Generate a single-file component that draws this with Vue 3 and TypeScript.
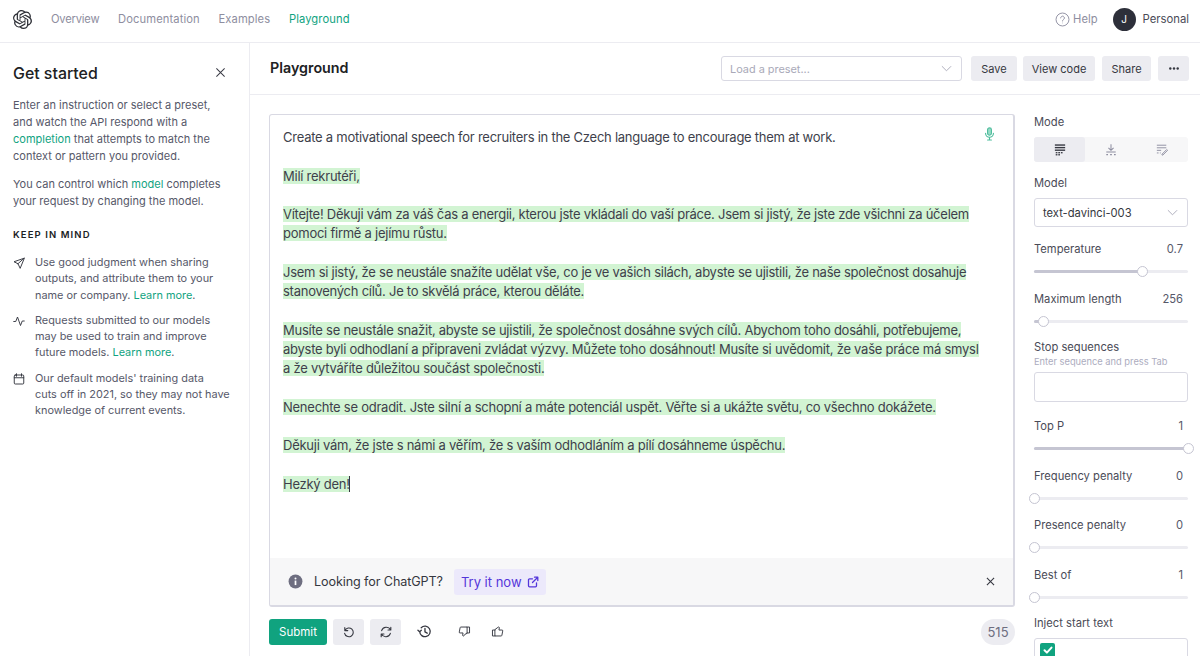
<script setup lang="ts">
interface Slider { label: string; value: string; pct: number }
const navItems = ['Overview', 'Documentation', 'Examples']
const sliders1: Slider[] = [
  { label: 'Temperature', value: '0.7', pct: 70 },
  { label: 'Maximum length', value: '256', pct: 6 },
]
const sliders2: Slider[] = [
  { label: 'Top P', value: '1', pct: 100 },
  { label: 'Frequency penalty', value: '0', pct: 0 },
  { label: 'Presence penalty', value: '0', pct: 0 },
  { label: 'Best of', value: '1', pct: 0 },
]
const paragraphs: string[][] = [
  ['Milí rekrutéři,'],
  ['Vítejte! Děkuji vám za váš čas a energii, kterou jste vkládali do vaší práce. Jsem si jistý, že jste zde všichni za účelem', 'pomoci firmě a jejímu růstu.'],
  ['Jsem si jistý, že se neustále snažíte udělat vše, co je ve vašich silách, abyste se ujistili, že naše společnost dosahuje', 'stanovených cílů. Je to skvělá práce, kterou děláte.'],
  ['Musíte se neustále snažit, abyste se ujistili, že společnost dosáhne svých cílů. Abychom toho dosáhli, potřebujeme,', 'abyste byli odhodlaní a připraveni zvládat výzvy. Můžete toho dosáhnout! Musíte si uvědomit, že vaše práce má smysl', 'a že vytváříte důležitou součást společnosti.'],
  ['Nenechte se odradit. Jste silní a schopní a máte potenciál uspět. Věřte si a ukážte světu, co všechno dokážete.'],
  ['Děkuji vám, že jste s námi a věřím, že s vaším odhodláním a pílí dosáhneme úspěchu.'],
  ['Hezký den!'],
]
</script>

<template>
  <div class="page">
    <header class="topbar">
      <svg class="logo" viewBox="0 0 24 24" fill="#2d2f36"><path d="M22.2819 9.8211a5.9847 5.9847 0 0 0-.5157-4.9108 6.0462 6.0462 0 0 0-6.5098-2.9A6.0651 6.0651 0 0 0 4.9807 4.1818a5.9847 5.9847 0 0 0-3.9977 2.9 6.0462 6.0462 0 0 0 .7427 7.0966 5.98 5.98 0 0 0 .511 4.9107 6.051 6.051 0 0 0 6.5146 2.9001A5.9847 5.9847 0 0 0 13.2599 24a6.0557 6.0557 0 0 0 5.7718-4.2058 5.9894 5.9894 0 0 0 3.9977-2.9001 6.0557 6.0557 0 0 0-.7475-7.0729zm-9.022 12.6081a4.4755 4.4755 0 0 1-2.8764-1.0408l.1419-.0804 4.7783-2.7582a.7948.7948 0 0 0 .3927-.6813v-6.7369l2.02 1.1686a.071.071 0 0 1 .038.052v5.5826a4.504 4.504 0 0 1-4.4945 4.4944zm-9.6607-4.1254a4.4708 4.4708 0 0 1-.5346-3.0137l.142.0852 4.783 2.7582a.7712.7712 0 0 0 .7806 0l5.8428-3.3685v2.3324a.0804.0804 0 0 1-.0332.0615L9.74 19.9502a4.4992 4.4992 0 0 1-6.1408-1.6464zM2.3408 7.8956a4.485 4.485 0 0 1 2.3655-1.9728V11.6a.7664.7664 0 0 0 .3879.6765l5.8144 3.3543-2.0201 1.1685a.0757.0757 0 0 1-.071 0l-4.8303-2.7865A4.504 4.504 0 0 1 2.3408 7.872zm16.5963 3.8558L13.1038 8.364 15.1192 7.2a.0757.0757 0 0 1 .071 0l4.8303 2.7913a4.4944 4.4944 0 0 1-.6765 8.1042v-5.6772a.79.79 0 0 0-.407-.667zm2.0107-3.0231l-.142-.0852-4.7735-2.7818a.7759.7759 0 0 0-.7854 0L9.409 9.2297V6.8974a.0662.0662 0 0 1 .0284-.0615l4.8303-2.7866a4.4992 4.4992 0 0 1 6.6802 4.66zM8.3065 12.863l-2.02-1.1638a.0804.0804 0 0 1-.038-.0567V6.0742a4.4992 4.4992 0 0 1 7.3757-3.4537l-.142.0805L8.704 5.459a.7948.7948 0 0 0-.3927.6813zm1.0976-2.3654l2.602-1.4998 2.6069 1.4998v2.9994l-2.5974 1.4997-2.6067-1.4997Z"/></svg>
      <nav class="nav">
        <a v-for="n in navItems" :key="n" class="nav-link">{{ n }}</a>
        <a class="nav-link active">Playground</a>
      </nav>
      <div class="top-right">
        <svg class="help-ic" viewBox="0 0 16 16" fill="none" stroke="#8e8ea0" stroke-width="1"><circle cx="8" cy="8" r="6.9"/><path d="M6 6.3a2 2 0 1 1 3 1.8c-.7.4-1 .8-1 1.5" stroke-linecap="round"/><circle cx="8" cy="11.6" r=".5" fill="#8e8ea0" stroke="none"/></svg>
        <span class="help">Help</span>
        <span class="avatar">J</span>
        <span class="personal">Personal</span>
      </div>
    </header>

    <div class="body">
      <aside class="side">
        <div class="side-head">
          <h2>Get started</h2>
          <svg class="close" viewBox="0 0 12 12" fill="none" stroke="#3a3b45" stroke-width="1.1"><path d="M1.5 1.5l9 9M10.5 1.5l-9 9"/></svg>
        </div>
        <p class="side-p">Enter an instruction or select a preset,<br>and watch the API respond with a<br><a>completion</a> that attempts to match the<br>context or pattern you provided.</p>
        <p class="side-p second">You can control which <a>model</a> completes<br>your request by changing the model.</p>
        <h3>KEEP IN MIND</h3>
        <div class="tip">
          <svg viewBox="0 0 24 24" fill="none" stroke="#353740" stroke-width="1.9" stroke-linejoin="round" stroke-linecap="round"><path d="M22 2.5L2 9.5l8 4 4 8.5zM22 2.5L10 13.5"/></svg>
          <p>Use good judgment when sharing<br>outputs, and attribute them to your<br>name or company. <a>Learn more</a>.</p>
        </div>
        <div class="tip">
          <svg viewBox="0 0 24 24" fill="none" stroke="#353740" stroke-width="1.9" stroke-linejoin="round" stroke-linecap="round"><path d="M1.5 13h4l3.5-9 6 17 3.5-9h4"/></svg>
          <p>Requests submitted to our models<br>may be used to train and improve<br>future models. <a>Learn more</a>.</p>
        </div>
        <div class="tip">
          <svg viewBox="0 0 24 24" fill="none" stroke="#353740" stroke-width="1.9" stroke-linejoin="round" stroke-linecap="round"><rect x="2.5" y="4" width="19" height="18" rx="2"/><path d="M7 1.5v5M17 1.5v5M2.5 9.5h19"/></svg>
          <p>Our default models' training data<br>cuts off in 2021, so they may not have<br>knowledge of current events.</p>
        </div>
      </aside>

      <main class="main">
        <div class="title-bar">
          <h1>Playground</h1>
          <div class="actions">
            <div class="preset">
              <span>Load a preset...</span>
              <svg class="chev" viewBox="0 0 12 7" fill="none" stroke="#a9a9b8" stroke-width="1"><path d="M1 1l5 5 5-5"/></svg>
            </div>
            <button class="btn save">Save</button>
            <button class="btn code">View code</button>
            <button class="btn share">Share</button>
            <button class="btn more">
              <svg width="10" height="3" viewBox="0 0 10 3" fill="#353740"><circle cx="1.3" cy="1.5" r="1.2"/><circle cx="5" cy="1.5" r="1.2"/><circle cx="8.7" cy="1.5" r="1.2"/></svg>
            </button>
          </div>
        </div>

        <div class="content">
          <section class="editor-col">
            <div class="editor">
              <div class="text">
                <svg class="mic" viewBox="0 0 12 16" fill="none" stroke="#4fbd9d" stroke-width="1.3" stroke-linecap="round"><rect x="3.8" y="1" width="4.4" height="8.4" rx="2.2" fill="#9adcc8"/><path d="M1.5 7.2a4.5 4.5 0 0 0 9 0M6 11.8v3M3.8 14.8h4.4"/></svg>
                <p class="prompt">Create a motivational speech for recruiters in the Czech language to encourage them at work.</p>
                <p v-for="(para, i) in paragraphs" :key="i" class="para">
                  <template v-for="(line, j) in para" :key="j"><mark>{{ line }}</mark><br></template>
                </p>
                <span class="caret"></span>
              </div>
              <div class="notice">
                <svg class="info" viewBox="0 0 16 16"><circle cx="8" cy="8" r="7.4" fill="#6e6e80"/><rect x="7.1" y="7" width="1.8" height="4.8" fill="#fff"/><circle cx="8" cy="4.9" r="1.05" fill="#fff"/></svg>
                <span class="look">Looking for ChatGPT?</span>
                <span class="try">Try it now
                  <svg viewBox="0 0 12 12" fill="none" stroke="#5436da" stroke-width="1.3" stroke-linecap="round" stroke-linejoin="round"><path d="M9.5 6.8v3a1 1 0 0 1-1 1h-6a1 1 0 0 1-1-1v-6a1 1 0 0 1 1-1h3M7.5 1.2h3.3v3.3M10.8 1.2L5.5 6.5"/></svg>
                </span>
                <svg class="notice-x" viewBox="0 0 10 10" fill="none" stroke="#353740" stroke-width="1.2"><path d="M1 1l8 8M9 1L1 9"/></svg>
              </div>
            </div>
            <div class="toolbar">
              <button class="submit">Submit</button>
              <button class="tool">
                <svg viewBox="0 0 16 16" fill="none" stroke="#353740" stroke-width="1.25" stroke-linecap="round" stroke-linejoin="round"><path d="M3.2 3v3.4h3.4M3.4 6.2A5 5 0 1 1 3 9.5"/></svg>
              </button>
              <button class="tool">
                <svg viewBox="0 0 16 16" fill="none" stroke="#353740" stroke-width="1.25" stroke-linecap="round" stroke-linejoin="round"><path d="M13.5 2.5v3.2h-3.2M2.5 13.5v-3.2h3.2M13.3 5.6A5.6 5.6 0 0 0 3 6.5M2.7 10.4A5.6 5.6 0 0 0 13 9.5"/></svg>
              </button>
              <span class="plain hist">
                <svg viewBox="0 0 16 16" fill="none" stroke="#353740" stroke-width="1.4" stroke-linecap="round" stroke-linejoin="round"><path d="M1 6.6l1.8 1.8 1.8-1.8M2.9 8a5.6 5.6 0 1 0 1.6-4M8.5 4.8v3.6l2.4 1.4"/></svg>
              </span>
              <span class="plain down">
                <svg viewBox="0 0 16 16" fill="none" stroke="#353740" stroke-width="1.15" stroke-linecap="round" stroke-linejoin="round"><path d="M11.2 9.8V2.5H3.6a1 1 0 0 0-1 .8L1.6 8.5a1 1 0 0 0 1 1.3h3.6l-.5 2.8c-.1.8.9 1.4 1.5.8l1-1.5zM11.2 2.5h3v7.3h-3"/></svg>
              </span>
              <span class="plain up">
                <svg viewBox="0 0 16 16" fill="none" stroke="#353740" stroke-width="1.15" stroke-linecap="round" stroke-linejoin="round"><path d="M4.8 6.2v7.3h7.6a1 1 0 0 0 1-.8l1-5.2a1 1 0 0 0-1-1.3H9.8l.5-2.8c.1-.8-.9-1.4-1.5-.8zM4.8 13.5h-3V6.2h3"/></svg>
              </span>
              <span class="count">515</span>
            </div>
          </section>

          <aside class="controls">
            <label class="lab">Mode</label>
            <div class="modes">
              <span class="mode on">
                <svg viewBox="0 0 14 14" fill="#353740"><rect x="1" y="1" width="12" height="1.6"/><rect x="1" y="4" width="12" height="1.6"/><rect x="1" y="7" width="12" height="1.6"/><rect x="2" y="10" width="2" height="1.5"/><rect x="5" y="10" width="2" height="1.5"/><rect x="8" y="10" width="2" height="1.5"/><rect x="2" y="12.4" width="2" height="1.5"/><rect x="5" y="12.4" width="2" height="1.5"/></svg>
              </span>
              <span class="mode">
                <svg viewBox="0 0 14 14" fill="none" stroke="#8e8ea0" stroke-width="1.2"><path d="M7 1v6.5M4 5l3 3 3-3M1.5 10h11"/><path d="M1.5 13h2M6 13h2M10.5 13h2" stroke-width="1.4"/></svg>
              </span>
              <span class="mode">
                <svg viewBox="0 0 14 14" fill="none" stroke="#8e8ea0" stroke-width="1.1"><path d="M1 2h11M1 5h11M1 8h5M1 11h2M4.5 11h1M7 12.5l5.5-5.5 1 1-5.5 5.5H7z"/></svg>
              </span>
            </div>
            <label class="lab model-lab">Model</label>
            <div class="select">
              <span>text-davinci-003</span>
              <svg class="chev" viewBox="0 0 12 7" fill="none" stroke="#a9a9b8" stroke-width="1"><path d="M1 1l5 5 5-5"/></svg>
            </div>
            <div v-for="s in sliders1" :key="s.label" class="slider">
              <div class="row"><span>{{ s.label }}</span><span class="val">{{ s.value }}</span></div>
              <div class="track">
                <div class="fill" :style="{ width: s.pct + '%' }"></div>
                <div class="knob" :style="{ left: s.pct + '%' }"></div>
              </div>
            </div>
            <label class="lab stop-lab">Stop sequences</label>
            <div class="hint">Enter sequence and press Tab</div>
            <div class="stop"></div>
            <div v-for="s in sliders2" :key="s.label" class="slider s2">
              <div class="row"><span>{{ s.label }}</span><span class="val">{{ s.value }}</span></div>
              <div class="track">
                <div class="fill" :style="{ width: s.pct + '%' }"></div>
                <div class="knob" :style="{ left: s.pct + '%' }"></div>
              </div>
            </div>
            <label class="lab inject-lab">Inject start text</label>
            <div class="inject">
              <span class="check">
                <svg viewBox="0 0 12 12" fill="none" stroke="#fff" stroke-width="2" stroke-linecap="round" stroke-linejoin="round"><path d="M2.5 6.2l2.4 2.4 4.6-5"/></svg>
              </span>
            </div>
          </aside>
        </div>
      </main>
    </div>
  </div>
</template>

<style>
html, body { margin: 0; background: #fff; }
</style>

<style scoped>
* { box-sizing: border-box; }
.page {
  width: 1200px; height: 656px; overflow: hidden; background: #fff;
  font-family: Inter, "Noto Sans", sans-serif; color: #353740; font-size: 12px;
  display: flex; flex-direction: column;
}
a { color: #10a37f; }
.topbar {
  height: 43px; flex: none; border-bottom: 1px solid #ececf1;
  display: flex; align-items: center; padding: 0 11px 4px 13px;
}
.logo { width: 19px; height: 19px; }
.nav { display: flex; gap: 18.7px; margin-left: 19px; }
.nav-link { color: #8e8ea0; font-size: 11.2px; letter-spacing: 0.1px; }
.nav-link:first-child { letter-spacing: -0.2px; }
.nav-link.active { color: #10a37f; }
.top-right { margin-left: auto; display: flex; align-items: center; }
.help-ic { width: 15px; height: 15px; }
.help { color: #8e8ea0; font-size: 11.2px; margin-left: 3px; }
.avatar {
  width: 23px; height: 23px; border-radius: 50%; background: #2d2f3a; color: #fff;
  display: flex; align-items: center; justify-content: center; font-size: 10px; margin-left: 15px;
}
.personal { margin-left: 7px; font-size: 11.3px; color: #4a4b57; }
.body { flex: 1; display: flex; min-height: 0; }
.side {
  width: 250px; flex: none; border-right: 1px solid #ececf1; padding: 22px 13px 0;
  color: #565869; font-size: 11px; line-height: 17px;
}
.side-head { display: flex; justify-content: space-between; align-items: center; }
.side-head h2 { margin: 0; font-size: 15.9px; font-weight: 500; color: #202123; line-height: 18px; }
.close { width: 11px; height: 11px; margin-right: 10px; margin-top: -4px; }
.side-p { margin: 14px 0 0; white-space: nowrap; }
.side-p.second { margin-top: 11px; }
.side h3 {
  margin: 18px 0 0; font-size: 9.5px; letter-spacing: 1.1px; font-weight: 600; color: #202123; line-height: 14px;
}
.tip { display: flex; margin-top: 9px; }
.side h3 + .tip { margin-top: 12px; }
.tip svg { width: 12px; height: 12px; flex: none; margin: 3px 10px 0 0; }
.tip p { margin: 0; line-height: 16.3px; white-space: nowrap; font-size: 10.9px; }
.main { flex: 1; min-width: 0; display: flex; flex-direction: column; }
.title-bar {
  height: 52px; flex: none; border-bottom: 1px solid #ececf1;
  display: flex; align-items: center; justify-content: space-between; padding: 0 11px 0 20px;
}
.title-bar h1 { margin: -2px 0 0; font-size: 14.3px; font-weight: 600; color: #202123; }
.actions { display: flex; align-items: center; gap: 7px; }
.preset {
  width: 241px; height: 25px; border: 1px solid #d9d9e3; border-radius: 3px; margin-right: 2px;
  display: flex; align-items: center; justify-content: space-between; padding: 0 9px 0 8px;
  color: #a9a9b8; font-size: 10.9px;
}
.chev { width: 11px; height: 7px; }
.btn {
  height: 25px; border: 0; border-radius: 3px; background: #ececf1; color: #353740;
  font: inherit; font-size: 11px; padding: 0; display: flex; align-items: center; justify-content: center;
}
.btn.save { width: 46px; margin-right: -1px; }
.btn.code { width: 72px; }
.btn.share { width: 49px; }
.btn.more { width: 31px; }
.content { flex: 1; display: flex; min-height: 0; padding: 19px 11px 0 19px; }
.editor-col { width: 746px; flex: none; }
.editor {
  height: 493px; border: 1px solid #d9d9e3; border-radius: 3px; display: flex; flex-direction: column;
  overflow: hidden; border-width: 1px 2px 2px 1px;
}
.text {
  flex: 1; padding: 13px 13px 0; position: relative; font-size: 13px; line-height: 19.25px; letter-spacing: -0.25px;
  color: #3e3f4b; white-space: nowrap;
}
.mic { position: absolute; right: 18px; top: 12px; width: 11px; height: 14px; }
.prompt { margin: 0; }
.para { margin: 19.25px 0 0; }
mark { background: #d2f4d3; color: #3e3f4b; }
.caret { position: absolute; left: 79px; top: 361px; width: 1px; height: 16px; background: #353740; }
.notice {
  height: 47px; flex: none; background: #f7f7f8; display: flex; align-items: center; padding: 0 18px 0 18px;
}
.info { width: 15px; height: 15px; }
.look { margin-left: 11px; font-size: 12.6px; letter-spacing: -0.1px; color: #353740; }
.try {
  margin-left: 11px; height: 26px; padding: 0 7px; background: #ece9fb; border-radius: 3px;
  color: #5436da; font-size: 13px; display: flex; align-items: center; gap: 5px;
}
.try svg { width: 12px; height: 12px; }
.notice-x { margin-left: auto; width: 9px; height: 9px; }
.toolbar { display: flex; align-items: center; margin-top: 11px; height: 27px; }
.submit {
  width: 58px; height: 26px; background: #10a37f; color: #fff; border: 0; border-radius: 3px;
  font: inherit; font-size: 11.5px; padding: 0;
}
.tool {
  width: 31px; height: 26px; background: #ececf1; border: 0; border-radius: 3px; margin-left: 6px;
  display: flex; align-items: center; justify-content: center; padding: 0;
}
.tool svg { width: 14px; height: 14px; }
.plain { display: flex; }
.plain svg { width: 14px; height: 14px; }
.hist { margin-left: 16px; }
.hist svg { width: 15px; height: 15px; }
.down { margin-left: 26px; }
.down svg, .up svg { width: 13px; height: 13px; }
.up { margin-left: 20px; }
.count {
  margin-left: auto; width: 34px; height: 26px; border-radius: 13px; background: #ececf1;
  display: flex; align-items: center; justify-content: center; font-size: 13px; color: #6e6e80;
}
.controls { width: 154px; margin-left: 19px; flex: none; position: relative; font-size: 11.2px; color: #4a4b57; padding-top: 1px; }
.lab { display: block; line-height: 14px; }
.modes { display: flex; height: 25px; background: #f7f7f8; border-radius: 3px; margin-top: 8px; }
.mode { flex: 1; display: flex; align-items: center; justify-content: center; border-radius: 3px; }
.mode.on { background: #ececf1; }
.mode svg { width: 12px; height: 13px; }
.model-lab { margin-top: 14px; }
.select {
  height: 29px; margin-top: 8px; border: 1px solid #d9d9e3; border-radius: 3px; padding: 0 9px 0 8px;
  display: flex; align-items: center; justify-content: space-between; font-size: 11.2px; color: #353740;
}
.slider { height: 50px; }
.select + .slider { margin-top: 15px; }
.slider.s2 { height: 49.7px; }
.row { display: flex; justify-content: space-between; line-height: 14px; padding-right: 5px; }
.val { color: #565869; }
.track { position: relative; height: 3px; background: #ececf1; border-radius: 2px; margin-top: 14px; }
.fill { position: absolute; left: 0; top: 0; bottom: 0; background: #c5c5d2; border-radius: 2px; }
.knob {
  position: absolute; top: -4px; width: 11px; height: 11px; margin-left: -5px; border: 1px solid #c5c5d2;
  border-radius: 50%; background: #fff;
}
.stop-lab { margin-top: -2px; }
.hint { font-size: 9.3px; color: #acacbe; line-height: 14px; margin-top: 1px; }
.stop { height: 30px; border: 1px solid #d9d9e3; border-radius: 3px; margin-top: 3px; margin-bottom: 17px; }
.inject-lab { margin-top: -2px; }
.inject { height: 40px; margin-top: 8px; border: 1px solid #d9d9e3; border-radius: 3px; padding: 4px 5px; }
.check {
  width: 15px; height: 15px; border-radius: 2px; background: #10a37f; display: flex; align-items: center; justify-content: center;
}
.check svg { width: 12px; height: 12px; }
</style>
